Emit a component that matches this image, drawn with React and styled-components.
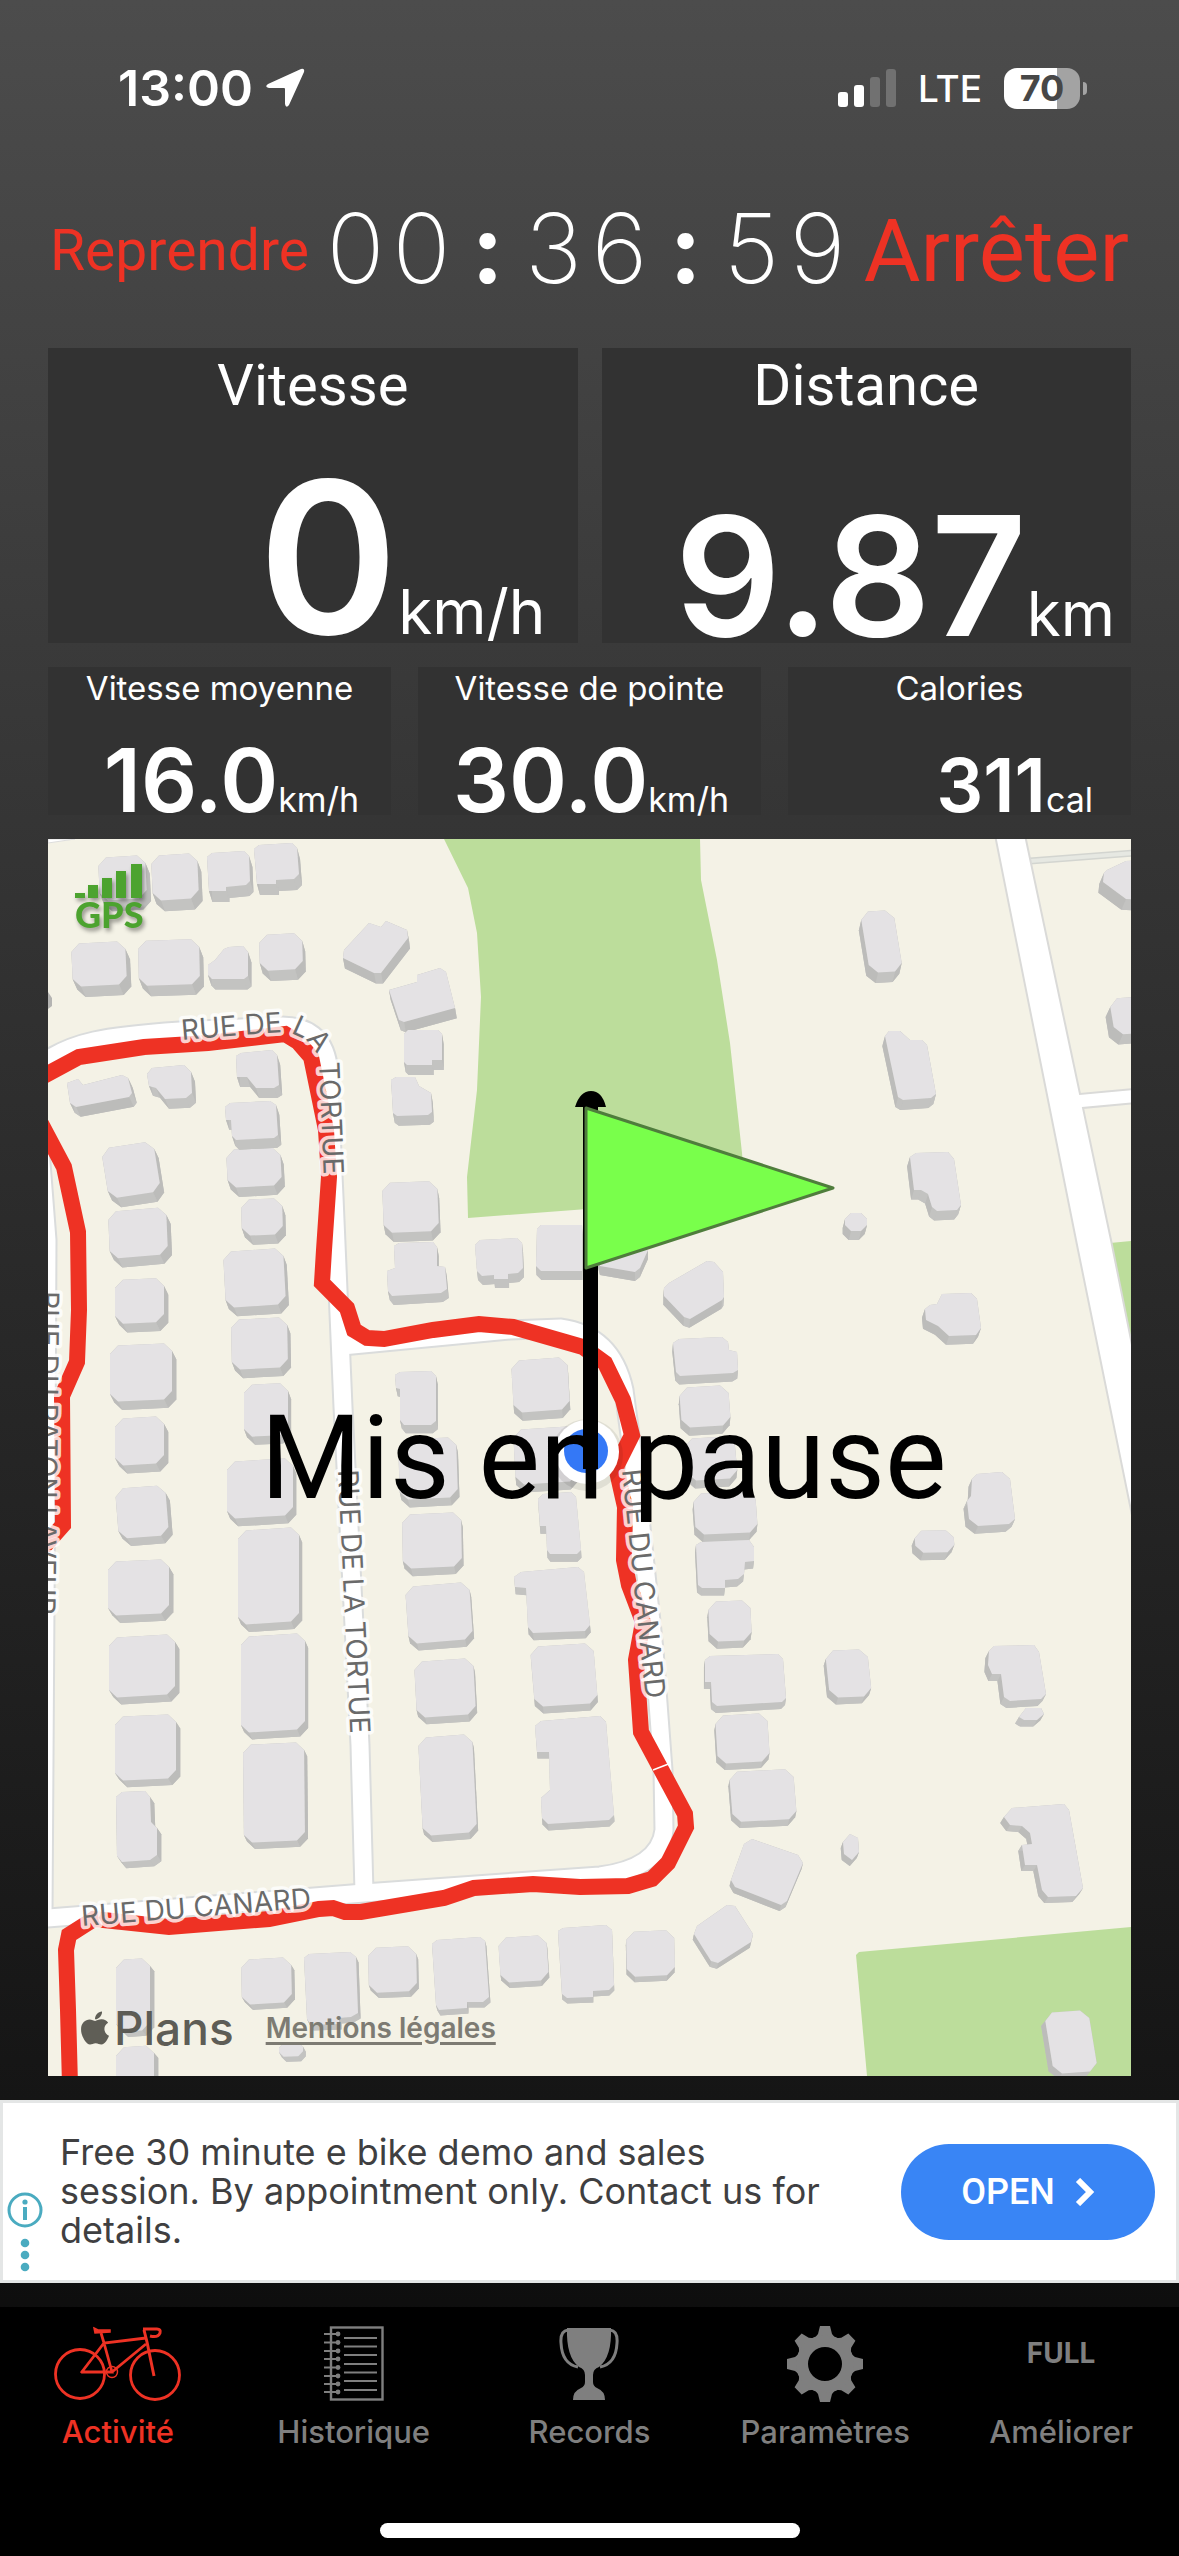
import React from 'react'
import styled, { createGlobalStyle } from 'styled-components'
import { FaApple } from 'react-icons/fa'

const RED = '#ee3224'

// x, y, width, height, rise of the top edge, drift of the left edge
const boxes = [
  [98, 858, 47, 43, 3, 2], [151, 856, 46, 45, 3, 2], [71, 944, 54, 43, 3, 2],
  [138, 941, 61, 45, 2, 1], [259, 935, 43, 36, 2, 1], [226, 1150, 54, 38, 3, 2],
  [241, 1200, 41, 36, 2, 1], [101, 1149, 52, 50, 8, 8], [108, 1212, 58, 47, 5, 2],
  [382, 1183, 55, 50, 2, 2], [679, 1388, 49, 40, 3, 3], [684, 1439, 50, 42, 3, 4],
  [693, 1494, 62, 41, 3, 3], [708, 1602, 42, 40, 2, 2], [715, 1716, 52, 48, 3, 3],
  [729, 1772, 64, 50, 3, 4], [626, 1932, 48, 45, 2, 1], [498, 1938, 48, 45, 3, 3],
  [368, 1948, 48, 45, 2, 1], [241, 1960, 50, 45, 3, 1], [279, 2043, 24, 14, 1, 0],
  [116, 1960, 34, 72, 2, 0], [116, 2048, 38, 50, 3, 0], [115, 1717, 61, 64, 3, 0],
  [109, 1638, 66, 60, 4, 0], [108, 1562, 61, 54, 3, 0], [115, 1489, 50, 50, 4, 4],
  [115, 1419, 49, 47, 3, 0], [110, 1346, 62, 56, 3, 0], [115, 1280, 49, 44, 2, 0],
  [223, 1252, 60, 56, 4, 3], [231, 1320, 56, 50, 3, 1], [244, 1385, 44, 52, 2, 0],
  [227, 1462, 66, 57, 4, 0], [238, 1531, 61, 94, 4, 0], [241, 1637, 64, 96, 4, 0],
  [243, 1745, 61, 98, 3, 1], [398, 1440, 58, 60, 3, 2], [402, 1515, 59, 54, 3, 1],
  [405, 1587, 64, 57, 5, 4], [414, 1662, 59, 56, 4, 3], [418, 1738, 54, 98, 4, 5],
  [511, 1361, 56, 52, 4, 3], [513, 1430, 62, 55, 4, 3], [530, 1647, 63, 60, 4, 5],
  [860, 912, 33, 61, 2, 10], [845, 1213, 22, 18, 0, 0], [1109, 999, 36, 36, 3, 6],
  [914, 1531, 39, 22, 1, 2], [825, 1651, 42, 47, 2, 5], [1044, 2013, 44, 61, 3, 10],
]

// houses with an odd outline
const outlines = [
  '207,857 212,853 244,851 249,856 250,881 246,885 226,887 226,891 209,891',
  '254,849 259,845 292,843 297,848 299,874 294,879 276,880 276,884 257,884',
  '208,965 215,960 224,949 229,947 243,946 248,952 248,976 244,979 212,979 208,975',
  '369,923 381,927 386,921 407,930 408,938 381,973 374,973 343,958 344,950',
  '389,990 417,982 417,975 440,968 446,972 455,1008 404,1022 399,1020',
  '404,1034 408,1030 438,1030 442,1034 442,1060 432,1060 432,1065 407,1065 404,1062',
  '391,1080 396,1077 415,1077 419,1086 431,1093 432,1112 428,1115 397,1116 393,1113',
  '67,1083 78,1079 83,1085 122,1075 128,1078 132,1093 129,1097 76,1107 70,1103',
  '147,1074 152,1068 184,1065 191,1072 192,1093 186,1098 165,1099 156,1088 149,1086',
  '236,1056 241,1053 272,1050 277,1055 279,1085 274,1088 256,1088 247,1077 237,1077',
  '225,1107 230,1103 270,1101 276,1105 278,1135 274,1138 236,1140 232,1136 231,1120 226,1120',
  '394,1246 399,1243 433,1242 437,1247 437,1266 445,1267 447,1289 441,1293 392,1296 388,1291 387,1271 395,1268',
  '475,1245 480,1240 517,1238 522,1243 523,1268 518,1273 508,1274 508,1279 494,1279 494,1275 482,1276 477,1271',
  '537,1229 541,1225 582,1225 582,1271 541,1271 536,1266',
  '596,1250 648,1250 640,1268 635,1272 600,1266',
  '664,1288 669,1283 707,1261 714,1262 723,1272 724,1297 722,1300 690,1319 684,1317 664,1296',
  '673,1343 679,1339 722,1337 728,1342 729,1350 737,1352 738,1370 733,1373 680,1376 676,1372',
  '696,1545 701,1542 749,1540 754,1547 754,1561 745,1562 744,1574 738,1579 725,1580 725,1588 702,1588 698,1585',
  '705,1660 710,1656 778,1654 783,1659 786,1698 782,1702 717,1706 712,1702 711,1682 705,1682',
  '752,1839 798,1855 803,1863 787,1901 781,1905 735,1887 731,1880 744,1844',
  '727,1905 735,1906 753,1934 751,1942 718,1963 711,1961 694,1934 697,1926',
  '558,1931 563,1928 606,1925 612,1930 614,1985 609,1990 593,1991 593,1997 567,1998 562,1994',
  '432,1944 437,1940 480,1937 485,1941 489,1997 483,2002 467,2002 467,2008 439,2010 436,2005',
  '304,1958 309,1954 350,1952 356,1957 358,2013 351,2017 339,2018 339,2024 311,2025 307,2019',
  '116,1797 122,1792 145,1791 150,1797 151,1822 157,1828 157,1855 150,1860 122,1862 117,1856',
  '395,1375 400,1372 431,1371 436,1376 436,1421 431,1425 404,1425 400,1420 400,1389 396,1388',
  '538,1499 543,1494 571,1492 576,1497 581,1550 577,1554 550,1554 547,1550 546,1526 540,1526',
  '514,1577 521,1572 578,1567 584,1572 590,1625 585,1631 533,1633 528,1627 526,1588 515,1587',
  '535,1726 541,1721 600,1716 606,1722 614,1815 609,1820 548,1824 542,1818 541,1798 550,1790 549,1752 537,1752',
  '885,1036 889,1031 900,1031 910,1040 922,1040 927,1045 936,1094 931,1098 903,1100 898,1097',
  '910,1157 916,1153 948,1152 954,1159 961,1205 957,1210 937,1211 932,1207 928,1194 921,1190 914,1190',
  '1104,873 1107,870 1126,861 1145,860 1145,900 1126,899 1103,882',
  '925,1309 930,1305 937,1304 942,1294 971,1293 977,1299 981,1328 976,1335 949,1336 938,1326 926,1320',
  '972,1479 977,1474 1002,1472 1010,1479 1015,1519 1009,1524 978,1526 969,1519 967,1501 971,1496',
  '989,1651 994,1646 1034,1645 1039,1652 1046,1694 1041,1699 1010,1701 1004,1697 1001,1674 992,1674 988,1665',
  '1019,1717 1026,1708 1041,1708 1044,1714 1037,1720 1024,1720',
  '1004,1817 1012,1808 1064,1804 1069,1810 1083,1888 1076,1896 1048,1897 1042,1890 1037,1865 1025,1865 1022,1845 1032,1844 1030,1833 1022,1826 1010,1825',
  '843,1842 850,1834 858,1838 859,1852 852,1860 844,1854',
]

const route =
  'M40 1078 L79 1057 L144 1047 L208 1043 L285 1034 L298 1042 L311 1057 L326 1130 L329 1177 L324 1250 L322 1283 L347 1308 L354 1330 L367 1338 L384 1339 L433 1330 L479 1324 L513 1327 L583 1347 L605 1363 L623 1400 L632 1435 L616 1467 L625 1507 L624 1560 L629 1585 L643 1622 L636 1660 L641 1732 L685 1814 L686 1827 L668 1863 L652 1879 L628 1886 L580 1887 L533 1884 L474 1888 L444 1898 L361 1912 L345 1912 L333 1908 L319 1909 L269 1919 L169 1927 L94 1919 L69 1935 L66 1950 L68 2010 L70 2085'
const routeWest = 'M38 1118 L64 1167 L78 1232 L79 1310 L77 1362 L62 1396 L63 1525 L48 1542 L36 1534'

const roads = [
  'M36 1068 C70 1040 110 1036 180 1031 L280 1026 Q322 1025 328 1065 L334 1197 L343 1407 L360 1745 L364 1892',
  'M342 1346 L510 1330 L560 1328 Q612 1335 624 1390 L636 1480 L654 1650 L658 1703 L663 1770 L664 1830 Q660 1868 600 1876 L364 1893 L36 1919',
  'M40 1150 L47 1240 L46 1450 L43 1915',
]

const labels = [
  { id: 'tortue-north', text: 'RUE DE LA TORTUE', d: 'M182 1040 L240 1035 L283 1032 Q312 1036 319 1062 L326 1230' },
  { id: 'tortue', text: 'RUE DE LA TORTUE', d: 'M338 1470 L353 1790' },
  { id: 'canard-east', text: 'RUE DU CANARD', d: 'M622 1470 L652 1760' },
  { id: 'canard', text: 'RUE DU CANARD', d: 'M82 1926 L360 1904' },
  { id: 'raton', text: 'RUE DU RATON LAVEUR', d: 'M39 1291 L34 1700' },
]

const toPoints = (list) => list.map((p) => p.join(',')).join(' ')

function boxPoints([x, y, w, h, rise, drift]) {
  const corners = [[x, y], [x + w, y - rise], [x + w + drift, y - rise + h], [x + drift, y + h]]
  const cut = Math.min(8, h / 3, w / 3)
  const points = []
  corners.forEach((c, i) => {
    [corners[(i + 3) % 4], corners[(i + 1) % 4]].forEach((n) => {
      const len = Math.hypot(n[0] - c[0], n[1] - c[1])
      points.push([c[0] + ((n[0] - c[0]) * cut) / len, c[1] + ((n[1] - c[1]) * cut) / len])
    })
  })
  return points
}

function House({ points }) {
  const [x, y] = points[0]
  // walls lean away from the middle of the map and get shorter to the south
  const dx = (590 - x) * 0.009
  const dy = 11 - (y - 840) * 0.005
  const base = points.map((p) => [p[0] + dx, p[1] + dy])
  return (
    <g>
      <polygon points={toPoints(base)} fill="#c0c0be" />
      {points.map((p, i) => {
        const j = (i + 1) % points.length
        const flat = Math.abs(p[1] - points[j][1]) < 6
        return <polygon key={i} points={toPoints([p, points[j], base[j], base[i]])} fill={flat ? '#c3c3c1' : '#bcbcba'} />
      })}
      <polygon points={toPoints(points)} fill="#e4e2e4" />
    </g>
  )
}

function RideMap() {
  const houses = [
    ...boxes.map(boxPoints),
    ...outlines.map((o) => o.split(' ').map((p) => p.split(',').map(Number))),
  ]
  return (
    <MapSvg viewBox="48 839 1083 1237" role="img" aria-label="Carte du parcours">
      <rect x="48" y="839" width="1083" height="1237" fill="#f4f2e6" />
      <path d="M444 839 L468 888 L477 933 L481 997 L477 1090 L467 1177 L468 1218 L746 1197 L742 1153 L730 1043 L717 960 L701 880 L700 839 Z" fill="#bcdd9b" />
      <path d="M859 1952 L1131 1927 V2076 H867 L856 1955 Z" fill="#bcdd9b" />
      <path d="M1110 1243 L1131 1241 V1350 Z" fill="#bcdd9b" />
      <path d="M48 843 L75 839 H48 Z" fill="#fff" stroke="#ddd" />
      <path d="M1030 861 L1135 853" stroke="#d3d5d0" strokeWidth="7" />
      <path d="M1030 861 L1135 853" stroke="#e6e8e2" strokeWidth="4" />
      <path d="M995 835 L1025 835 L1080 1094 L1135 1089 V1103 L1083 1108 L1111 1240 L1135 1360 V1530 L1078 1250 Z" fill="#fff" stroke="#dadad8" strokeWidth="2" />
      {roads.map((d) => <path key={d} d={d} fill="none" stroke="#dadcdc" strokeWidth="21" />)}
      {roads.map((d) => <path key={d} d={d} fill="none" stroke="#fff" strokeWidth="17" />)}
      {houses.map((points, i) => <House key={i} points={points} />)}
      <path d="M48 992 L52 998 V1006 L48 1009 Z" fill="#b4b4b2" />
      <g fill="none" stroke={RED} strokeWidth="16">
        <path d={route} />
        <path d={routeWest} />
      </g>
      <path d="M653 1770 L671 1763" stroke="#fff" strokeWidth="1.5" />
      {labels.map(({ id, text, d }) => (
        <g key={id}>
          <path id={id} d={d} fill="none" />
          <StreetName><textPath href={`#${id}`}>{text}</textPath></StreetName>
        </g>
      ))}
      <circle cx="587" cy="1455" r="36" fill="#000" opacity="0.08" />
      <circle cx="587" cy="1452" r="32" fill="#fff" />
      <circle cx="586" cy="1451" r="22" fill="#3478f6" />
      <rect x="583" y="1100" width="15" height="369" fill="#000" />
      <path d="M575 1107 Q580 1091 591 1091 Q602 1091 606 1107 Z" fill="#000" />
      <path d="M586 1108 L833 1188 L586 1268 Z" fill="#79ff4b" stroke="#4f7d3c" strokeWidth="3" strokeLinejoin="round" />
    </MapSvg>
  )
}

const BikeIcon = () => (
  <svg width="130" height="76" viewBox="-1 0 130 76" fill="none" stroke="currentColor" strokeWidth="2.8">
    <circle cx="26" cy="48" r="24.5" />
    <circle cx="101" cy="49" r="24.5" />
    <path d="M27 47 L50 17 L92 12 M50 17 L58 46 H27 M47 7 L50 17 M58 46 L92 18" />
    <path d="M90 4 L93 16 L100 50 M89 3 H103 Q107 3 106 7 Q104 12 96 10" strokeWidth="3" />
    <path d="M40 2 L44 4 L56 4 V6 L41 7 Z" fill="currentColor" strokeWidth="1.5" />
    <circle cx="58" cy="46" r="5.5" strokeWidth="1.4" />
  </svg>
)

const NotebookIcon = () => (
  <svg width="60" height="76" viewBox="0 0 60 76" fill="none" stroke="currentColor" strokeWidth="2">
    <rect x="7" y="1.5" width="51.5" height="72" strokeWidth="2.4" />
    {[8, 16.5, 25, 33, 41.5, 50, 58, 66].map((y) => (
      <g key={y}>
        <path d={`M0 ${y} H14`} />
        <circle cx="14" cy={y} r="2.4" fill="currentColor" stroke="none" />
      </g>
    ))}
    {[12, 20.5, 29, 38, 46.5, 55, 64].map((y) => <path key={y} d={`M20 ${y} H53`} />)}
  </svg>
)

const TrophyIcon = () => (
  <svg width="60" height="76" viewBox="0 0 60 76" fill="currentColor">
    <path d="M8 2 H52 Q53 31 40 41 Q34 43 34 49 V56 Q34 60 38 62 Q46 65 46 74 H14 Q14 65 22 62 Q26 60 26 56 V49 Q26 43 20 41 Q7 31 8 2 Z" />
    <path d="M9 4 Q1 5 2 17 Q3 38 19 41 M51 4 Q59 5 58 17 Q57 38 41 41" fill="none" stroke="currentColor" strokeWidth="3" />
  </svg>
)

const GearIcon = () => (
  <svg width="76" height="76" viewBox="-38 -38 76 76" fill="currentColor">
    {[0, 45, 90, 135, 180, 225, 270, 315].map((a) => (
      <path key={a} transform={`rotate(${a})`} d="M-12 -24 L-7 -30 L-5 -38 H5 L7 -30 L12 -24 Z" />
    ))}
    <path fillRule="evenodd" d="M0 -29 A29 29 0 1 0 0 29 A29 29 0 1 0 0 -29 Z M0 -17 A17 17 0 1 1 0 17 A17 17 0 1 1 0 -17 Z" />
  </svg>
)

const tabs = [
  { name: 'Activité', icon: <BikeIcon />, active: true },
  { name: 'Historique', icon: <NotebookIcon /> },
  { name: 'Records', icon: <TrophyIcon /> },
  { name: 'Paramètres', icon: <GearIcon /> },
  { name: 'Améliorer', icon: 'FULL' },
]

function Stat({ title, value, unit, size, small, inset }) {
  return (
    <Card $small={small}>
      <CardTitle $small={small}>{title}</CardTitle>
      <Reading $inset={inset}>
        <Value $size={size}>{value}</Value>
        <Unit $small={small}>{unit}</Unit>
      </Reading>
    </Card>
  )
}

export default function App() {
  return (
    <Screen>
      <GlobalStyle />
      <StatusBar>
        <Clock>
          13:00
          <svg width="40" height="40" viewBox="0 0 40 40" fill="#fff">
            <path d="M36 1 Q40 0 39 4 L24 37 Q21 41 20 36 V21 Q20 20 19 20 H4 Q-1 19 3 16 Z" />
          </svg>
        </Clock>
        <Indicators>
          <svg width="58" height="38" viewBox="0 0 58 38">
            <rect x="0" y="23" width="10" height="15" rx="3" fill="#fff" />
            <rect x="16" y="16" width="10" height="22" rx="3" fill="#fff" />
            <rect x="32" y="8" width="10" height="30" rx="3" fill="#717171" />
            <rect x="48" y="0" width="10" height="38" rx="3" fill="#717171" />
          </svg>
          <span>LTE</span>
          <Battery>70</Battery>
        </Indicators>
      </StatusBar>

      <Controls>
        <TextButton $size={57}>Reprendre</TextButton>
        <Timer>
          {'00:36:59'.split('').map((c, i) => <Digit key={i} $colon={c === ':'}>{c}</Digit>)}
        </Timer>
        <TextButton $size={87}>Arrêter</TextButton>
      </Controls>

      <Main>
        <Stats $columns={2}>
          <Stat title="Vitesse" value="0" unit="km/h" size={212} inset={32} />
          <Stat title="Distance" value="9.87" unit="km" size={166} inset={16} />
        </Stats>
        <Stats $columns={3}>
          <Stat small title="Vitesse moyenne" value="16.0" unit="km/h" size={88} inset={32} />
          <Stat small title="Vitesse de pointe" value="30.0" unit="km/h" size={88} inset={32} />
          <Stat small title="Calories" value="311" unit="cal" size={74} inset={38} />
        </Stats>
        <MapPanel>
          <RideMap />
          <Gps>
            <svg width="68" height="34" viewBox="0 0 68 34" fill="#4ca32f">
              <rect x="0" y="29" width="10" height="5" />
              <rect x="13" y="21" width="10" height="13" />
              <rect x="27" y="14" width="10" height="20" />
              <rect x="41" y="7" width="10" height="27" />
              <rect x="56" y="0" width="11" height="34" />
            </svg>
            GPS
          </Gps>
          <Paused>Mis en pause</Paused>
          <Credits>
            <Plans><FaApple size={38} />Plans</Plans>
            <Legal href="#legal">Mentions légales</Legal>
          </Credits>
        </MapPanel>
      </Main>

      <Ad>
        <AdChoices>
          <svg width="36" height="80" viewBox="0 0 36 80" fill="#4aabc0">
            <circle cx="18" cy="18" r="16" fill="none" stroke="#4aabc0" strokeWidth="3" />
            <circle cx="18" cy="10" r="2.6" />
            <rect x="16" y="15" width="4" height="13" />
            <circle cx="18" cy="51" r="4.3" />
            <circle cx="18" cy="63" r="4.3" />
            <circle cx="18" cy="75" r="4.3" />
          </svg>
        </AdChoices>
        <AdText>Free 30 minute e bike demo and sales session. By appointment only. Contact us for details.</AdText>
        <OpenButton>
          OPEN
          <svg width="20" height="28" viewBox="0 0 20 28" fill="none" stroke="#fff" strokeWidth="6">
            <path d="M3 2 L15 14 L3 26" />
          </svg>
        </OpenButton>
      </Ad>

      <TabBar>
        {tabs.map((tab) => (
          <Tab key={tab.name} href="#" $active={tab.active}>
            <TabIcon>{tab.icon}</TabIcon>
            {tab.name}
          </Tab>
        ))}
        <HomeIndicator />
      </TabBar>
    </Screen>
  )
}

const GlobalStyle = createGlobalStyle`
  body {
    margin: 0;
    background: #000;
    font-family: Inter, 'Liberation Sans', sans-serif;
  }
  * {
    box-sizing: border-box;
  }
  button {
    font: inherit;
    border: none;
    background: none;
    padding: 0;
    cursor: pointer;
  }
`

const Screen = styled.div`
  min-height: 100vh;
  display: flex;
  flex-direction: column;
  color: #fff;
  background: linear-gradient(#4c4c4c, #353535 32%, #151515 82%, #0d0d0d 91%);
`

const StatusBar = styled.header`
  display: flex;
  justify-content: space-between;
  align-items: center;
  height: 176px;
  padding: 0 99px 0 118px;
`

const Clock = styled.div`
  display: flex;
  align-items: center;
  gap: 12px;
  font-size: 50px;
  font-weight: 600;
`

const Indicators = styled.div`
  display: flex;
  align-items: center;
  gap: 22px;
  font-size: 37px;
  font-weight: 500;
`

const Battery = styled.div`
  position: relative;
  width: 76px;
  height: 41px;
  line-height: 41px;
  border-radius: 13px;
  background: linear-gradient(90deg, #fff 70%, #a3a3a3 70%);
  color: #474747;
  font-size: 36px;
  font-weight: 700;
  text-align: center;
  &::after {
    content: '';
    position: absolute;
    right: -7px;
    top: 14px;
    width: 4px;
    height: 13px;
    border-radius: 0 4px 4px 0;
    background: #a3a3a3;
  }
`

const Controls = styled.div`
  display: flex;
  justify-content: space-between;
  align-items: center;
  padding: 24px 50px 46px;
`

const TextButton = styled.button`
  && {
    color: ${RED};
    font-family: Roboto, sans-serif;
    font-size: ${(p) => p.$size}px;
    line-height: 102px;
  }
`

const Timer = styled.time`
  display: grid;
  grid-template-columns: repeat(8, 66px);
  padding-bottom: 6px;
`

const Digit = styled.span`
  text-align: center;
  font-size: 96px;
  line-height: 96px;
  font-weight: ${(p) => (p.$colon ? 700 : 200)};
`

const Main = styled.main`
  display: flex;
  flex-direction: column;
  gap: 24px;
  padding: 0 48px 24px;
`

const Stats = styled.section`
  display: grid;
  grid-template-columns: repeat(${(p) => p.$columns}, 1fr);
  column-gap: ${(p) => (p.$columns === 2 ? 24 : 27)}px;
`

const Card = styled.div`
  display: flex;
  flex-direction: column;
  justify-content: space-between;
  min-height: ${(p) => (p.$small ? 148 : 295)}px;
  background: #323232;
`

const CardTitle = styled.h2`
  margin: 0;
  font-family: ${(p) => (p.$small ? 'Inter' : 'Roboto')}, sans-serif;
  font-weight: 400;
  text-align: center;
  font-size: ${(p) => (p.$small ? 33 : 58)}px;
  line-height: ${(p) => (p.$small ? 42 : 74)}px;
`

const Reading = styled.div`
  display: flex;
  justify-content: flex-end;
  align-items: baseline;
  padding-right: ${(p) => p.$inset}px;
`

const Value = styled.span`
  font-size: ${(p) => p.$size}px;
  font-weight: 600;
  line-height: 0.8;
`

const Unit = styled.span`
  font-size: ${(p) => (p.$small ? 34 : 62)}px;
  line-height: 0.8;
`

const MapPanel = styled.section`
  position: relative;
  overflow: hidden;
`

const MapSvg = styled.svg`
  display: block;
  width: 100%;
  height: auto;
`

const StreetName = styled.text`
  font-size: 28px;
  fill: #6a6a6a;
  stroke: #fffc;
  stroke-width: 7px;
  stroke-linejoin: round;
  paint-order: stroke;
`

const Gps = styled.div`
  position: absolute;
  left: 27px;
  top: 25px;
  display: flex;
  flex-direction: column;
  color: #4ca32f;
  font-family: Lato, sans-serif;
  font-size: 36px;
  font-weight: 900;
  line-height: 32px;
  filter: drop-shadow(2px 3px 2px #0006);
`

const Paused = styled.div`
  position: absolute;
  inset: 0 0 0 28px;
  display: grid;
  place-items: center;
  color: #000;
  font-family: Roboto, sans-serif;
  font-size: 116px;
  pointer-events: none;
`

const Credits = styled.div`
  position: absolute;
  left: 28px;
  bottom: 20px;
  display: flex;
  align-items: center;
  gap: 32px;
`

const Plans = styled.div`
  display: flex;
  align-items: center;
  color: #55544df0;
  font-size: 46px;
  font-weight: 500;
`

const Legal = styled.a`
  color: #7d7b73;
  font-size: 28px;
  font-weight: 600;
  text-decoration-thickness: 3px;
  text-underline-offset: 4px;
`

const Ad = styled.aside`
  display: flex;
  align-items: center;
  min-height: 183px;
  padding-right: 21px;
  border: 3px solid #e4e6e6;
  background: #fff;
  color: #3f3f41;
`

const AdChoices = styled.div`
  align-self: flex-end;
  width: 57px;
  padding: 0 4px 4px;
`

const AdText = styled.p`
  flex: 1;
  margin: 0;
  padding-right: 60px;
  font-size: 36px;
  line-height: 39px;
`

const OpenButton = styled.button`
  && {
    display: flex;
    align-items: center;
    justify-content: center;
    gap: 20px;
    width: 254px;
    height: 96px;
    border-radius: 48px;
    background: #3985f5;
    color: #fff;
    font-family: Roboto, sans-serif;
    font-size: 36px;
    font-weight: 500;
  }
`

const TabBar = styled.nav`
  position: relative;
  flex: 1;
  display: grid;
  grid-template-columns: repeat(5, 1fr);
  margin-top: 24px;
  padding: 19px 0 112px;
  background: #000;
`

const Tab = styled.a`
  display: flex;
  flex-direction: column;
  align-items: center;
  gap: 12px;
  color: ${(p) => (p.$active ? RED : '#7f7f7f')};
  font-size: 31px;
  font-weight: 500;
  line-height: 36px;
  text-decoration: none;
`

const TabIcon = styled.span`
  height: 76px;
  font-size: 28px;
  font-weight: 700;
  line-height: 54px;
  svg {
    display: block;
  }
`

const HomeIndicator = styled.div`
  position: absolute;
  bottom: 24px;
  left: 50%;
  width: 420px;
  height: 15px;
  margin-left: -210px;
  border-radius: 8px;
  background: #fff;
`
